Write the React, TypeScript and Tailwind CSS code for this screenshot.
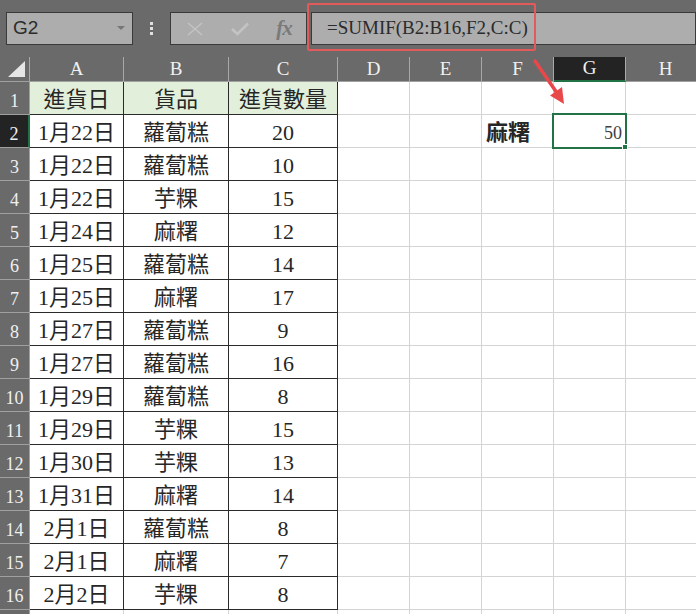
import React from "react";

const serif = "font-['Liberation_Serif','Noto_Sans_CJK_TC',serif]";

const rows: [string, string, string][] = [
  ["進貨日", "貨品", "進貨數量"],
  ["1月22日", "蘿蔔糕", "20"],
  ["1月22日", "蘿蔔糕", "10"],
  ["1月22日", "芋粿", "15"],
  ["1月24日", "麻糬", "12"],
  ["1月25日", "蘿蔔糕", "14"],
  ["1月25日", "麻糬", "17"],
  ["1月27日", "蘿蔔糕", "9"],
  ["1月27日", "蘿蔔糕", "16"],
  ["1月29日", "蘿蔔糕", "8"],
  ["1月29日", "芋粿", "15"],
  ["1月30日", "芋粿", "13"],
  ["1月31日", "麻糬", "14"],
  ["2月1日", "蘿蔔糕", "8"],
  ["2月1日", "麻糬", "7"],
  ["2月2日", "芋粿", "8"],
];

function ColHeader({ label, w, selected }: { label: string; w: string; selected?: boolean }) {
  return (
    <div
      className={`${w} shrink-0 h-[25px] flex items-center justify-center text-[19px] text-[#f0f0f0] ${serif} ${
        selected ? "bg-[#232323] border-b-2 border-b-[#217346] border-r border-r-[#a8a8a8]" : "border-r border-r-[#a8a8a8] border-b border-b-[#a0a0a0]"
      }`}
    >
      {label}
    </div>
  );
}

function RowHeader({ n, selected }: { n?: number; selected?: boolean }) {
  return (
    <div
      className={`w-[30px] shrink-0 h-[33px] flex items-end justify-center pb-[3px] text-[18px] leading-[20px] text-[#f0f0f0] ${serif} border-b border-b-[#a0a0a0] ${
        selected ? "bg-[#232323] border-r-2 border-r-[#217346]" : "bg-[#6a6a6a] border-r border-r-[#a0a0a0]"
      }`}
    >
      {n}
    </div>
  );
}

function Cell({
  w,
  children,
  dark,
  green,
  align = "center",
  extra = "",
}: {
  w: string;
  children?: React.ReactNode;
  dark?: boolean;
  green?: boolean;
  align?: "center" | "left" | "right";
  extra?: string;
}) {
  const al = align === "center" ? "justify-center" : align === "left" ? "justify-start pl-[4px]" : "justify-end pr-[3px]";
  return (
    <div
      className={`${w} shrink-0 h-[33px] flex items-end pb-[2px] ${al} text-[22px] leading-[24px] text-[#262626] ${serif} border-r border-b ${
        dark ? "border-[#2a2a2a]" : "border-[#d4d4d4]"
      } ${green ? "bg-[#e2efda]" : "bg-white"} ${extra}`}
    >
      {children}
    </div>
  );
}

export default function App() {
  return (
    <div className="w-[696px] h-[614px] overflow-hidden bg-[#6a6a6a] relative">
      {/* toolbar */}
      <div className="h-[57px] flex items-start pt-[12px] pl-[6px]">
        <div className="w-[127px] h-[33px] shrink-0 bg-[#adadad] border border-[#3a3a3a] flex items-center justify-between pl-[6px] pr-[7px]">
          <span className="text-[19px] text-[#2b2b2b] font-['Liberation_Sans',sans-serif] font-light">G2</span>
          <svg width="8" height="5" viewBox="0 0 8 5">
            <polygon points="0,0 8,0 4,4" fill="#777" />
          </svg>
        </div>
        <div className="w-[37px] h-[33px] shrink-0 flex flex-col items-center justify-center gap-[2px]">
          <div className="w-[3px] h-[3px] bg-[#e0e0e0]" />
          <div className="w-[3px] h-[3px] bg-[#e0e0e0]" />
          <div className="w-[3px] h-[3px] bg-[#e0e0e0]" />
        </div>
        <div className="w-[137px] h-[33px] shrink-0 bg-[#adadad] border border-[#3a3a3a] flex items-center">
          <div className="w-[47px] flex justify-center">
            <svg width="16" height="14" viewBox="0 0 16 14">
              <path d="M1 1 L15 13 M15 1 L1 13" stroke="#c3c3c3" strokeWidth="1.6" />
            </svg>
          </div>
          <div className="w-[44px] flex justify-center">
            <svg width="18" height="14" viewBox="0 0 18 14">
              <path d="M1 7 L6.5 12 L17 1.5" stroke="#c3c3c3" strokeWidth="2.6" fill="none" />
            </svg>
          </div>
          <div className="w-[44px] flex justify-center">
            <span className="text-[21px] italic font-bold text-[#7a7a7a] font-['Liberation_Serif',serif] tracking-[-1px]">fx</span>
          </div>
        </div>
        <div className="w-[4px] shrink-0" />
        <div className="flex-1 h-[33px] bg-[#adadad] border border-[#3a3a3a] flex items-center pl-[15px]">
          <span className="text-[19px] text-[#2b2b2b] font-['Liberation_Serif',serif]">=SUMIF(B2:B16,F2,C:C)</span>
        </div>
      </div>

      {/* column header */}
      <div className="flex">
        <div className="w-[30px] h-[25px] shrink-0 border-r border-r-[#a8a8a8] border-b border-b-[#a0a0a0] relative">
          <svg className="absolute left-[8px] top-[4px]" width="18" height="17" viewBox="0 0 18 17">
            <polygon points="0,16 17,0 17,16" fill="#e6e6e6" />
          </svg>
        </div>
        <ColHeader label="A" w="w-[94px]" />
        <ColHeader label="B" w="w-[105px]" />
        <ColHeader label="C" w="w-[109px]" />
        <ColHeader label="D" w="w-[72px]" />
        <ColHeader label="E" w="w-[72px]" />
        <ColHeader label="F" w="w-[72px]" />
        <ColHeader label="G" w="w-[72px]" selected />
        <ColHeader label="H" w="w-[80px]" />
      </div>

      {/* rows */}
      {rows.map((r, i) => {
        const n = i + 1;
        const head = n === 1;
        return (
          <div key={n} className="flex">
            <RowHeader n={n} selected={n === 2} />
            <Cell w="w-[94px]" dark green={head}>{r[0]}</Cell>
            <Cell w="w-[105px]" dark green={head}>{r[1]}</Cell>
            <Cell w="w-[109px]" dark green={head}>{r[2]}</Cell>
            <Cell w="w-[72px]" />
            <Cell w="w-[72px]" />
            <Cell w="w-[72px]" align="left" extra={n === 2 ? "font-bold" : ""}>
              {n === 2 ? "麻糬" : null}
            </Cell>
            <Cell w="w-[72px]" align="right">
              {n === 2 ? <span className="text-[18px] text-[#404040]">50</span> : null}
            </Cell>
            <Cell w="w-[80px]" />
          </div>
        );
      })}
      <div className="flex">
        <RowHeader />
        <Cell w="w-[94px]" />
        <Cell w="w-[105px]" />
        <Cell w="w-[109px]" />
        <Cell w="w-[72px]" />
        <Cell w="w-[72px]" />
        <Cell w="w-[72px]" />
        <Cell w="w-[72px]" />
        <Cell w="w-[80px]" />
      </div>

      {/* selection box around G2 */}
      <div className="absolute left-[552px] top-[113px] w-[75px] h-[36px] border-2 border-[#217346] pointer-events-none" />
      <div className="absolute left-[622px] top-[144px] w-[6px] h-[6px] bg-[#217346] border border-white pointer-events-none" />

      {/* red highlight around formula */}
      <div className="absolute left-[307px] top-[3px] w-[229px] h-[48px] border-2 border-[#e25a5a] rounded-[2px] pointer-events-none" />

      {/* arrow */}
      <svg className="absolute left-0 top-0 pointer-events-none" width="696" height="614" viewBox="0 0 696 614">
        <line x1="535" y1="61" x2="557" y2="93" stroke="#e8484a" strokeWidth="3.5" strokeLinecap="round" />
        <polygon points="564,104 550,95.5 562,87" fill="#e8484a" />
      </svg>
    </div>
  );
}
